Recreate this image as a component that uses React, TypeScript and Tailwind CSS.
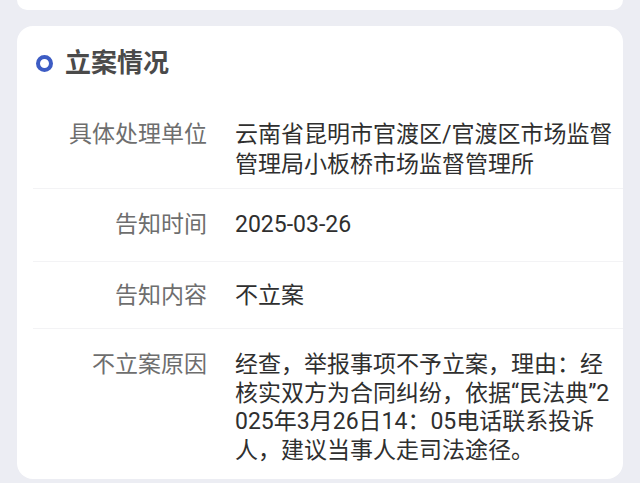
const font = "font-['Roboto','Noto_Sans_CJK_SC',sans-serif]";

type Row = { label: string; value: string; cls: string; lead: string };

const rows: Row[] = [
  {
    label: "具体处理单位",
    value: "云南省昆明市官渡区/官渡区市场监督管理局小板桥市场监督管理所",
    cls: "pt-[39px] pb-[8px]",
    lead: "leading-[30px]",
  },
  { label: "告知时间", value: "2025-03-26", cls: "border-t border-[#f3f3f5] pt-[21px] pb-[21px]", lead: "leading-[30px]" },
  { label: "告知内容", value: "不立案", cls: "border-t border-[#f3f3f5] pt-[19px] pb-[17px]", lead: "leading-[30px]" },
  {
    label: "不立案原因",
    value:
      "经查，举报事项不予立案，理由：经核实双方为合同纠纷，依据“民法典”2025年3月26日14：05电话联系投诉人，建议当事人走司法途径。",
    cls: "border-t border-[#f3f3f5] pt-[22px] pb-[14px]",
    lead: "leading-[28.5px]",
  },
];

export default function App() {
  return (
    <div className={`min-h-[483px] bg-[#ecedf3] px-[17px] ${font}`}>
      <div className="h-[10px] rounded-b-2xl bg-white" />
      <div className="mt-[16px] rounded-2xl bg-white pt-[19px]">
        <div className="flex items-center gap-[12px] pl-[19px]">
          <span className="h-[17px] w-[17px] rounded-full border-[4.5px] border-[#3d5cc4]" />
          <h2 className="text-[26px] leading-[36px] font-bold text-[#4a4a4a]">立案情况</h2>
        </div>
        <div className="ml-[16px]">
          {rows.map((r) => (
            <div key={r.label} className={`flex gap-[28px] ${r.cls}`}>
              <div className={`w-[174px] shrink-0 text-right text-[23px] text-[#6e6e6e] ${r.lead}`}>
                {r.label}
              </div>
              <div className={`w-[379px] break-all text-[23px] text-[#2f2f2f] ${r.lead}`}>{r.value}</div>
            </div>
          ))}
        </div>
      </div>
    </div>
  );
}
